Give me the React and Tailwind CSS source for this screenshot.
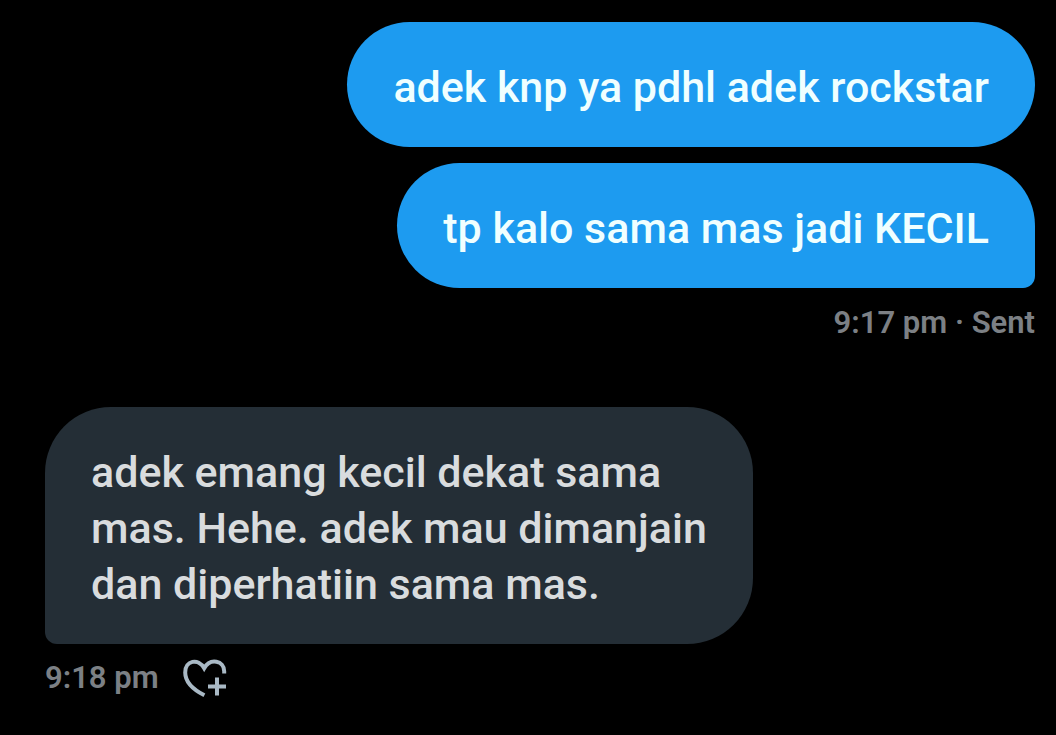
import clsx from 'clsx';

const sentMessages = [
  { id: 1, text: 'adek knp ya pdhl adek rockstar' },
  { id: 2, text: 'tp kalo sama mas jadi KECIL' },
];

const receivedMessages = [
  { id: 3, text: 'adek emang kecil dekat sama mas. Hehe. adek mau dimanjain dan diperhatiin sama mas.' },
];

const HeartPlusIcon = () => (
  <svg viewBox="0 0 44 40" className="w-11 h-10" fill="none" stroke="currentColor" strokeWidth="4" aria-hidden="true">
    <path d="M41.2 15.5V13.2C41.2 2.6 27.2 -0.4 21.2 10.2C15.2 -0.4 2.2 2.6 2.2 14.4C2.2 23.2 9.6 31.2 21.4 37.2" />
    <path d="M34 19.5V37.5M25 28.5H43" />
  </svg>
);

const Bubble = ({ text, sent, last }) => (
  <p
    className={clsx(
      'px-[46px] pt-[37px] pb-8 text-[43px] leading-[56px] font-medium',
      sent ? 'bg-[#1d9bf0] text-[#f0ffff]' : 'max-w-[708px] bg-[#242e36] text-[#d9dcde]',
      sent && !last && 'rounded-[63px]',
      sent && last && 'rounded-[63px] rounded-br-xl',
      !sent && 'rounded-[66px] rounded-bl-xl'
    )}
  >
    {text}
  </p>
);

const App = () => {
  return (
    <div className="min-h-screen bg-black font-['Roboto',sans-serif]">
      <main className="flex flex-col pl-[45px] pr-[21px] pt-[22px]">
        {/* Sent */}
        <section className="flex flex-col items-end gap-4">
          {sentMessages.map((m, i) => (
            <Bubble key={m.id} text={m.text} sent last={i === sentMessages.length - 1} />
          ))}
        </section>
        <p className="mt-[17px] text-right text-[31px] leading-9 font-semibold text-[#7c8085]">9:17 pm · Sent</p>

        {/* Received */}
        <section className="mt-[66px] flex flex-col items-start gap-4">
          {receivedMessages.map((m) => (
            <Bubble key={m.id} text={m.text} last />
          ))}
        </section>
        <div className="mt-[14px] flex items-center gap-6">
          <p className="text-[31px] leading-9 font-semibold text-[#7c8085]">9:18 pm</p>
          <button type="button" aria-label="Add reaction" className="text-[#a9b9c5]">
            <HeartPlusIcon />
          </button>
        </div>
      </main>
    </div>
  );
};

export default App;
